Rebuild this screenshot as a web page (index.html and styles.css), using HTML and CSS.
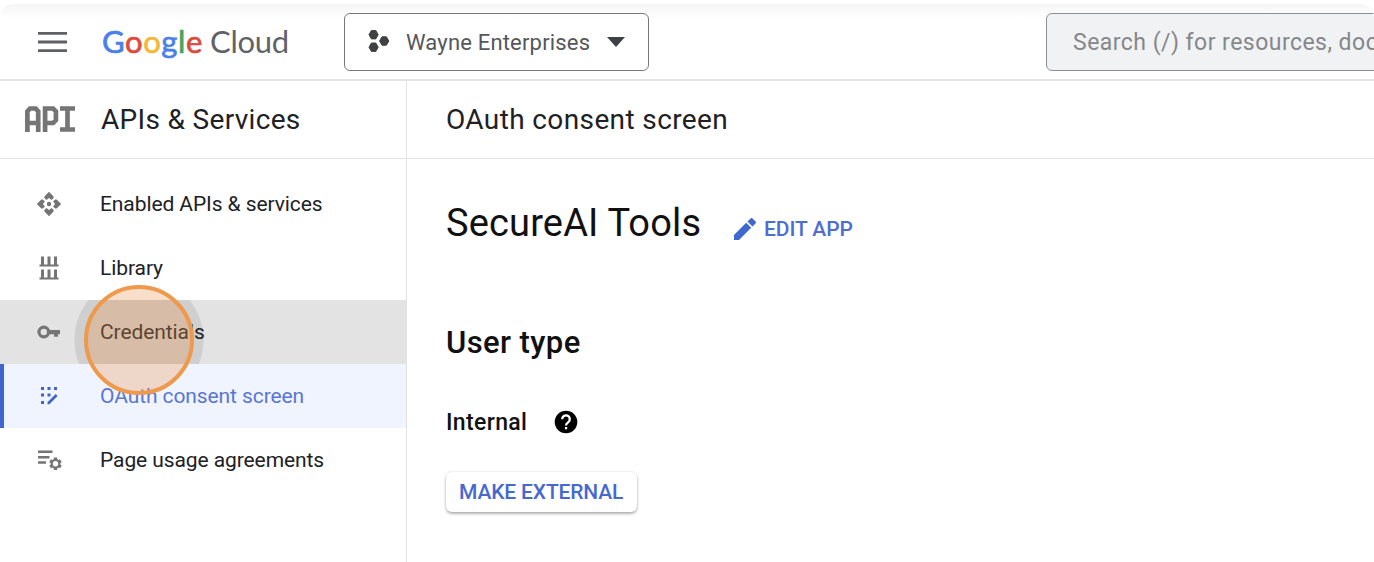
FILE: index.html
```html
<!DOCTYPE html>
<html lang="en">
<head>
<meta charset="utf-8">
<title>OAuth consent screen</title>
<link rel="stylesheet" href="styles.css">
</head>
<body>
<div class="app">
  <header class="topbar">
    <svg class="menu" viewBox="0 0 30 20"><path d="M0 1.400h29M0 10h29M0 18.600h29" stroke="#606164" stroke-width="2.800"/></svg>
    <div class="logo"><span class="google"><span class="b">G</span><span class="r">o</span><span class="y">o</span><span class="b">g</span><span class="g">l</span><span class="r">e</span></span><span class="cloud">Cloud</span></div>
    <div class="project">
      <svg class="hexes" viewBox="0 0 22 24" fill="#404144" stroke="#404144" stroke-linejoin="round"><path d="M3.400 1.500h4.400l2.400 4.200-2.400 4.200H3.400L1 5.700zM3.400 14h4.400l2.400 4.200-2.400 4.200H3.400L1 18.200zM14 7.800h4.400l2.400 4.200-2.400 4.200H14L11.600 12z"/></svg>
      <span class="project-name">Wayne Enterprises</span>
      <svg class="caret" viewBox="0 0 18 10"><path d="M0 0h18L9 10z" fill="#404144"/></svg>
    </div>
    <div class="search"><span class="search-text">Search (/) for resources, docs, products</span></div>
  </header>
  <div class="body">
    <aside class="sidebar">
      <div class="side-title">
        <svg class="api" viewBox="0 0 50 26" fill="none" stroke="#757575" stroke-width="4.700"><path d="M2.400 26V5.500l2.600-3h5.600l2.600 3V26M2.400 17H13.200M20.100 26V2.500h8l2.800 3v8.500l-2.800 3h-8M35 2.500h15M42.500 2.500v21M35 23.500h15"/></svg>
        <span class="t-side">APIs &amp; Services</span>
      </div>
      <nav class="nav">
        <a class="item"><svg class="ico" viewBox="0 0 26 26" fill="#757575"><path id="petal" d="M13 .8l4.600 4.600v1.500l-2 2L13 6.900l-2.600 2-2-2V5.400z"/><use href="#petal" transform="rotate(90 13 13)"/><use href="#petal" transform="rotate(180 13 13)"/><use href="#petal" transform="rotate(270 13 13)"/><circle cx="13" cy="13" r="2.200"/></svg><span class="t-enabled">Enabled APIs &amp; services</span></a>
        <a class="item"><svg class="ico" viewBox="0 0 26 26" stroke="#757575" fill="none"><path d="M3.500 10.500h19M3.500 23.500h19" stroke-width="2"/><path d="M6.500 1.500V10M13 1.500V10M19.500 1.500V10M6.500 14.500V23M13 14.500V23M19.500 14.500V23" stroke-width="3"/></svg><span class="t-library">Library</span></a>
        <a class="item hover"><svg class="ico" viewBox="0 0 26 26"><circle cx="7.800" cy="13" r="4.800" fill="none" stroke="#757575" stroke-width="3.200"/><path d="M12.500 11h11.500v4.200h-2v2.500h-4v-2.500h-5.500z" fill="#757575"/></svg><span class="t-cred">Credentials</span></a>
        <a class="item active"><svg class="ico" viewBox="0 0 26 26" fill="#4262c8"><path d="M5 4h3v3H5zM11.500 4h3v3h-3zM18 4h3v3h-3zM5 10.500h3v3H5zM11.500 10.500h3v3h-3zM5 18h3v3H5zM11.500 21.200v-2l8.200-8.200 1.900 1.900-8.200 8.300z"/></svg><span class="t-oauth">OAuth consent screen</span></a>
        <a class="item"><svg class="ico" viewBox="0 0 26 26"><path d="M2 4.800h14.500M2 10.200h11.500M2 15.500h8" stroke="#757575" stroke-width="2.500"/><path d="M19.500 10.500v12.600M14.100 13.700l10.800 6.200M24.900 13.700l-10.800 6.200" stroke="#757575" stroke-width="3.400"/><circle cx="19.500" cy="16.800" r="3.800" fill="#fff" stroke="#757575" stroke-width="2.200"/></svg><span class="t-page">Page usage agreements</span></a>
      </nav>
      <svg class="click" viewBox="0 0 110 110"><circle cx="55" cy="55" r="53" fill="#ec954c" fill-opacity=".3" stroke="#ef994c" stroke-width="4"/></svg>
    </aside>
    <main class="main">
      <div class="page-title"><span class="t-head">OAuth consent screen</span></div>
      <div class="content">
        <div class="app-row">
          <h1 class="t-app">SecureAI Tools</h1>
          <a class="edit"><svg class="pencil" viewBox="0 0 24 24" fill="#4066cf"><path d="M1 18V23h5L18.200 10.800l-5-5zM22.300 6.700c.8-.8.8-1.700 0-2.500l-2.500-2.500c-.8-.8-1.700-.8-2.500 0l-2.800 2.800 5 5z"/></svg><span class="t-edit">EDIT APP</span></a>
        </div>
        <h2 class="t-user">User type</h2>
        <div class="type-row"><span class="t-int">Internal</span><svg class="help" viewBox="0 0 24 24"><circle cx="12" cy="12" r="11.300"/><path d="M8.200 9.300a3.800 3.800 0 1 1 6.300 2.700c-1.300 1.100-2.500 1.600-2.500 3.500" fill="none" stroke="#fff" stroke-width="2.300"/><path d="M10.900 17h2.300v2.300h-2.300z" fill="#fff"/></svg></div>
        <button class="external"><span class="t-ext">MAKE EXTERNAL</span></button>
      </div>
    </main>
  </div>
</div>
</body>
</html>
```
FILE: styles.css
```css
* { box-sizing: border-box; }
body { margin: 0; background: #fff; font-family: Roboto, "Liberation Sans", sans-serif; color: #202124; overflow: hidden; white-space: nowrap; }
svg { display: block; flex: none; }
.app { height: 558px; margin-top: 4px; display: flex; flex-direction: column; overflow: hidden; border-radius: 14px 14px 0 0; }
.topbar { height: 77px; flex: none; display: flex; align-items: flex-start; padding: 9px 0 0 38px; border-bottom: 2px solid #e3e3e4; background: linear-gradient(#f5f5f5, #fff 14px); }
.topbar > * { flex: none; }
.menu { width: 30px; height: 20px; margin-top: 19px; }
.logo { display: flex; margin-left: 34px; height: 58px; line-height: 56px; font-family: Lato, sans-serif; font-size: 31px; }
.google { width: 108px; letter-spacing: .6px; -webkit-text-stroke: .7px; }
.cloud { width: 134px; color: #5f6368; letter-spacing: -.3px; }
.b { color: #4a80e8; } .r { color: #dc4b3e; } .y { color: #f0b93a; } .g { color: #4aa35a; }
.project { width: 305px; height: 58px; display: flex; align-items: center; border: 1.5px solid #77787b; border-radius: 6px; padding-left: 23px; }
.hexes { width: 22px; height: 24px; margin-top: -2px; }
.project-name { width: 201px; margin-left: 16px; font-size: 22px; letter-spacing: .18px; color: #55575b; }
.caret { width: 18px; height: 10px; }
.search { width: 360px; height: 58px; margin-left: 397px; border: 1.5px solid #8b8d90; border-radius: 6px; background: #f1f2f4; padding-left: 26px; line-height: 58px; color: #85878a; font-size: 23px; letter-spacing: .47px; }
.body { flex: 1; display: flex; }
.sidebar { width: 407px; position: relative; border-right: 1.5px solid #e3e3e3; }
.side-title, .page-title { height: 78px; display: flex; align-items: center; border-bottom: 1.5px solid #e3e3e3; }
.side-title { padding-left: 25px; font-size: 28px; letter-spacing: .32px; }
.api { width: 50px; height: 26px; margin: -1px 26px 0 0; }
.nav { padding-top: 13px; }
.item { height: 64px; display: flex; align-items: center; padding-left: 36px; font-size: 21px; letter-spacing: -.09px; }
.item span { margin-top: -1px; }
.ico { width: 26px; height: 26px; margin-right: 38px; }
.hover { background: radial-gradient(circle at 139px 40px, #cfcfcf 64px, #e3e3e3 65px); }
.active { background: #eff4fe; color: #5a76d2; border-left: 4px solid #4165d0; padding-left: 32px; }
.click { position: absolute; left: 84px; top: 204px; width: 110px; height: 110px; }
.main { flex: 1; }
.page-title { padding-left: 39px; font-size: 28px; letter-spacing: .38px; }
.content { padding: 41px 0 0 39px; color: #111; }
.app-row { display: flex; align-items: center; height: 46px; }
h1, h2 { margin: 0; }
h1 { font-size: 38px; font-weight: 400; width: 287px; letter-spacing: .15px; }
.edit { display: flex; align-items: center; color: #4e6dd4; font-size: 21px; font-weight: 500; letter-spacing: -.08px; margin-top: 12px; }
.pencil { width: 24px; height: 24px; margin-right: 7px; }
h2 { font-size: 31px; font-weight: 500; line-height: 40px; letter-spacing: .4px; margin-top: 77px; }
.type-row { display: flex; align-items: center; height: 30px; margin-top: 44px; font-size: 23px; font-weight: 500; letter-spacing: .35px; }
.help { width: 24px; height: 24px; margin-left: 27px; }
.external { display: block; width: 191px; height: 40px; margin-top: 35px; padding: 0 0 1px 13px; text-align: left; border: 0; border-radius: 6px; background: #fff; box-shadow: 0 2px 3px rgba(0,0,0,.28), 0 0 3px rgba(0,0,0,.12); color: #4668d0; font: 500 21px Roboto, sans-serif; letter-spacing: -.15px; }
```
